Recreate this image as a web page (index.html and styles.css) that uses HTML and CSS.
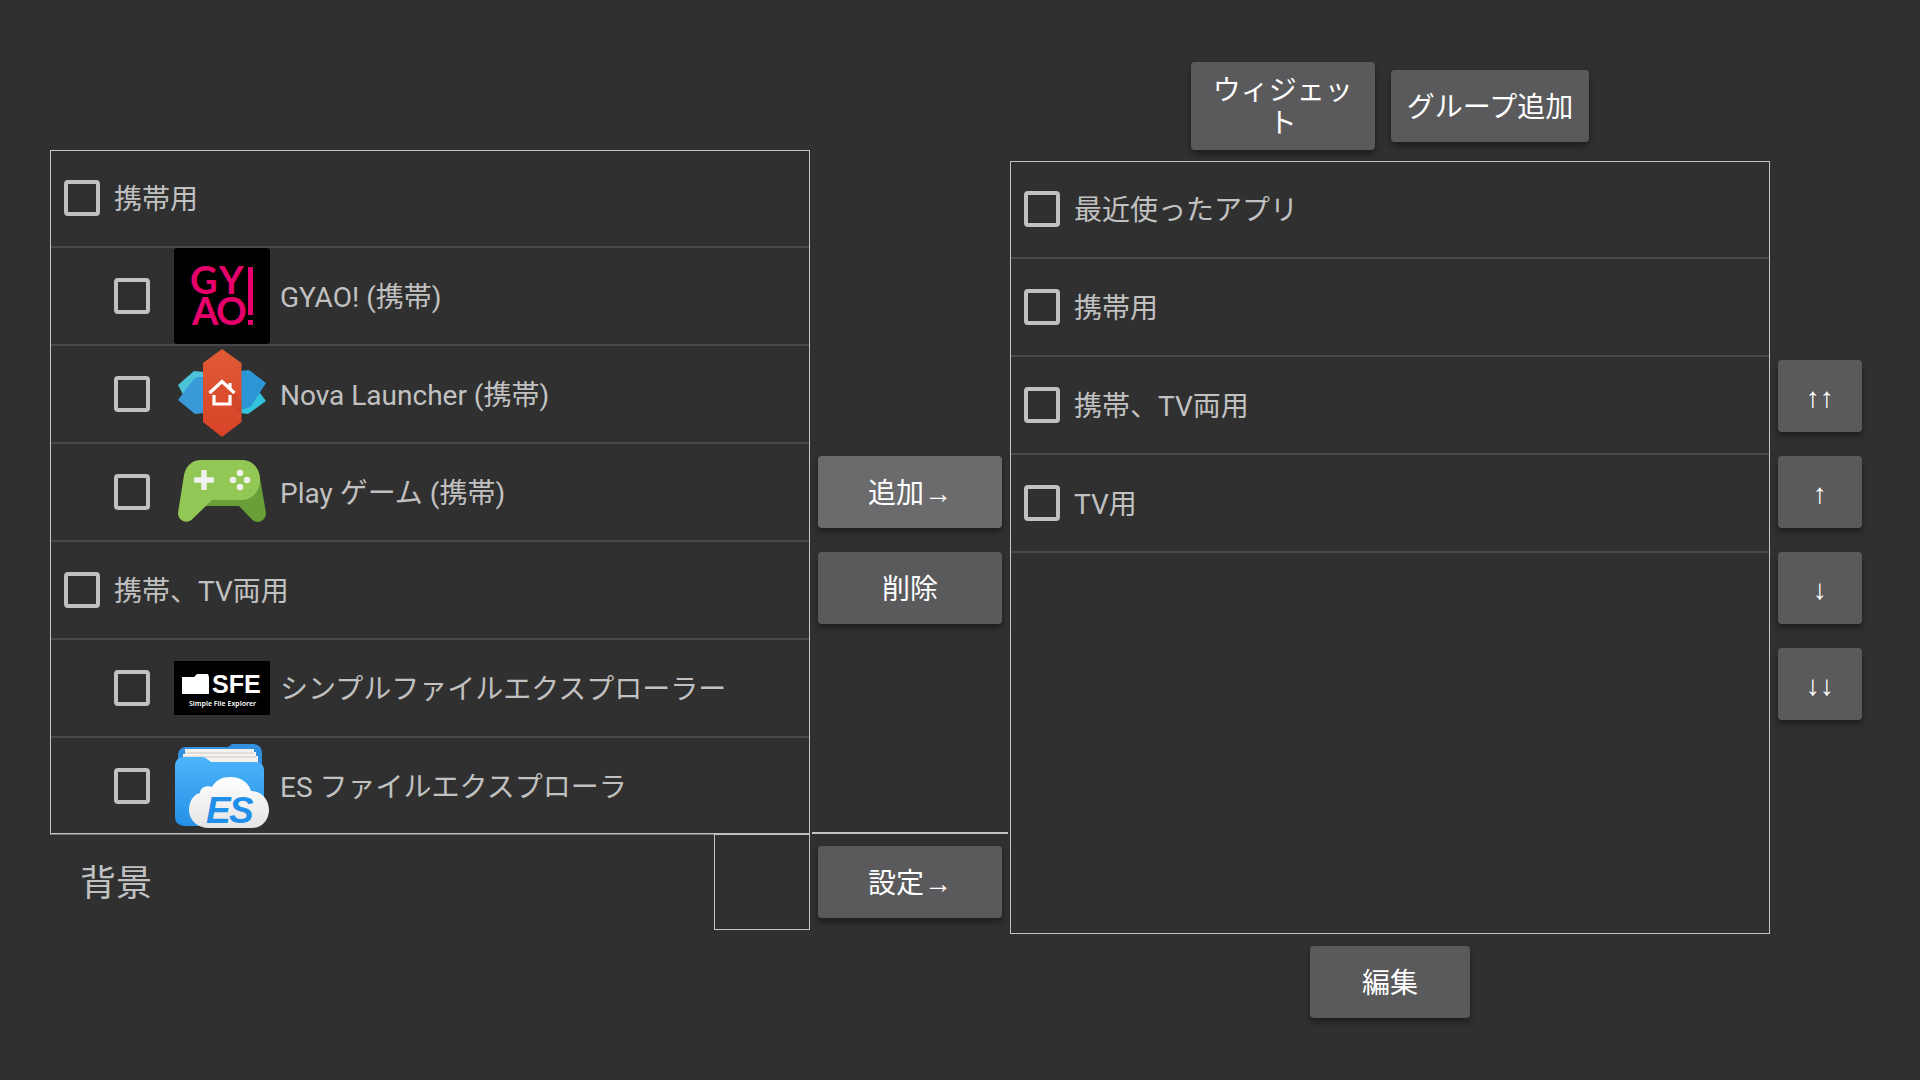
FILE: index.html
```html
<!DOCTYPE html>
<html lang="ja">

<head>
    <meta charset="UTF-8">
    <meta name="viewport" content="width=device-width, initial-scale=1.0">
    <title>アプリ編集</title>
    <link rel="stylesheet" href="styles.css">
</head>

<body>
    <main class="screen">
        <section class="source">
            <ul class="list">
                <li><label class="row"><input type="checkbox"><span>携帯用</span></label></li>
                <li>
                    <label class="row child">
                        <input type="checkbox">
                        <svg class="icon" viewBox="0 0 96 96" aria-hidden="true">
                            <rect width="96" height="96" rx="3" fill="#000"/>
                            <text fill="#e6006b" font-family="Lato, sans-serif" font-weight="700" font-size="38"><tspan x="16 45" y="46">GY</tspan><tspan x="18 42" y="77">AO</tspan></text>
                            <path d="M74 19h5v48h-5zM74 72h5v5h-5z" fill="#e6006b"/>
                        </svg>
                        <span>GYAO! (携帯)</span>
                    </label>
                </li>
                <li>
                    <label class="row child">
                        <input type="checkbox">
                        <svg class="icon" viewBox="0 0 96 96" aria-hidden="true">
                            <defs>
                                <linearGradient id="nova" x1="0" y1="0" x2="0" y2="1">
                                    <stop offset="0" stop-color="#e05a35"/>
                                    <stop offset="1" stop-color="#d84327"/>
                                </linearGradient>
                            </defs>
                            <path d="M4 39L20 25L30 26V60L14 58Z" fill="#4cc3d9"/>
                            <path d="M4 54L19 34Q21 31 24 31H30V67L21 68Z" fill="#3a9ad9"/>
                            <path d="M92 55L74 68L66 67V50L86 47Z" fill="#33c3da"/>
                            <path d="M66 25L75 24L92 37L78 59Q76 62 73 62L66 64Z" fill="#2b95d6"/>
                            <path d="M48 3L67.500 17V76L48 91L29 76V17Z" fill="url(#nova)"/>
                            <path d="M60 46L67.500 54V70L58 59V49Z" fill="#b93a22" opacity=".3"/>
                            <path d="M35.500 47L48 35.500L60.500 47M56 42V37M40 49V58H56V49" fill="none" stroke="#fff" stroke-width="3.200"/>
                        </svg>
                        <span>Nova Launcher (携帯)</span>
                    </label>
                </li>
                <li>
                    <label class="row child">
                        <input type="checkbox">
                        <svg class="icon" viewBox="0 0 96 96" aria-hidden="true">
                            <path d="M86 34L92 69C92 77 83 81 77.500 75L65 62H31L36 50L70 50Z" fill="#689f38"/>
                            <path d="M27 16H68C78 16 86 24 86 35C86 47 79 56 67 56H38L19 74.500C13 81 4 77 4 69L10 31C12 22 18 16 27 16Z" fill="#92c755"/>
                            <path d="M27.300 26h5.400v7.300H40v5.400h-7.300V46h-5.400v-7.300H20v-5.400h7.300z" fill="#f1f1f1"/>
                            <g fill="#f1f1f1">
                                <circle cx="66" cy="29" r="3.200"/>
                                <circle cx="59" cy="36" r="3.200"/>
                                <circle cx="73" cy="36" r="3.200"/>
                                <circle cx="66" cy="43" r="3.200"/>
                            </g>
                        </svg>
                        <span>Play ゲーム (携帯)</span>
                    </label>
                </li>
                <li><label class="row"><input type="checkbox"><span>携帯、TV両用</span></label></li>
                <li>
                    <label class="row child">
                        <input type="checkbox">
                        <svg class="icon" viewBox="0 0 96 96" aria-hidden="true">
                            <rect y="21" width="96" height="54" fill="#000"/>
                            <path d="M8 37H20L23 34H34L35 37V54H8Z" fill="#fff"/>
                            <text x="38" y="53" fill="#fff" font-family="Liberation Sans, sans-serif" font-weight="700" font-size="25">SFE</text>
                            <text x="15" y="66" fill="#fff" font-family="Noto Sans, sans-serif" font-weight="600" font-size="7">Simple File Explorer</text>
                        </svg>
                        <span>シンプルファイルエクスプローラー</span>
                    </label>
                </li>
                <li>
                    <label class="row child">
                        <input type="checkbox">
                        <svg class="icon" viewBox="0 0 96 96" aria-hidden="true">
                            <defs>
                                <linearGradient id="folder" x1="0" y1="0" x2="0" y2="1">
                                    <stop offset="0" stop-color="#4db5fb"/>
                                    <stop offset="1" stop-color="#2590e6"/>
                                </linearGradient>
                                <linearGradient id="cloud" x1="0" y1="0" x2="0" y2="1">
                                    <stop offset="0" stop-color="#fff"/>
                                    <stop offset="1" stop-color="#e4e4e6"/>
                                </linearGradient>
                            </defs>
                            <path d="M4 30V16Q5 10 11 9H54L58 6H80Q88 7 88 15V30Z" fill="#338fe0"/>
                            <path d="M11 11H80V14H82V18H84V26H9V16H11Z" fill="#f4f1ee"/>
                            <path d="M11 15H80M9 19H82" stroke="#cfc9c6" stroke-width="1"/>
                            <path d="M1 27Q2 19 10 19H28Q31 19 33 21L37 24H82Q90 25 90 32V80Q90 88 82 88H10Q1 87 1 79Z" fill="url(#folder)"/>
                            <path d="M35 90C23 90 15 82 15 72C15 63 20 56 26 55C26 50 32 47 38 49C42 42 48 39 56 39C67 39 75 45 77 53C88 53 95 62 95 72C95 82 88 90 78 90Z" fill="url(#cloud)"/>
                            <text x="32 55" y="85" fill="#1f8fea" font-family="Liberation Sans, sans-serif" font-weight="700" font-style="italic" font-size="37">ES</text>
                        </svg>
                        <span>ES ファイルエクスプローラ</span>
                    </label>
                </li>
            </ul>
            <div class="wallpaper">
                <span>背景</span>
                <div class="preview"></div>
            </div>
        </section>

        <section class="actions">
            <div class="stack">
                <button type="button" class="btn active">追加→</button>
                <button type="button" class="btn">削除</button>
            </div>
            <div class="settings">
                <button type="button" class="btn">設定→</button>
            </div>
        </section>

        <section class="target">
            <div class="toolbar">
                <button type="button" class="btn widget">ウィジェット</button>
                <button type="button" class="btn">グループ追加</button>
            </div>
            <ul class="list">
                <li><label class="row"><input type="checkbox"><span>最近使ったアプリ</span></label></li>
                <li><label class="row"><input type="checkbox"><span>携帯用</span></label></li>
                <li><label class="row"><input type="checkbox"><span>携帯、TV両用</span></label></li>
                <li><label class="row"><input type="checkbox"><span>TV用</span></label></li>
            </ul>
            <button type="button" class="btn edit">編集</button>
        </section>

        <section class="order stack">
            <button type="button" class="btn">↑↑</button>
            <button type="button" class="btn">↑</button>
            <button type="button" class="btn">↓</button>
            <button type="button" class="btn">↓↓</button>
        </section>
    </main>
</body>

</html>
```
FILE: styles.css
```css
* {
    box-sizing: border-box;
}

body {
    margin: 0;
    background-color: #303030;
    color: #c1c1c1;
    font-family: Roboto, "Noto Sans CJK JP", sans-serif;
    font-size: 28px;
    line-height: 33px;
}

.screen {
    display: grid;
    grid-template-columns: 1fr 200px 1fr 100px;
    height: 100vh;
    padding: 0 50px;
}

.source,
.target {
    display: flex;
    flex-direction: column;
    min-width: 0;
    min-height: 0;
}

.source {
    padding: 150px 0;
}

.target {
    padding: 62px 0;
}

/* the frame is an outline so that it lies over the rows */
.list {
    flex: 1;
    min-height: 0;
    margin: 0;
    padding: 0;
    overflow: hidden;
    list-style: none;
    outline: 1px solid #c1c1c1;
    outline-offset: -1px;
}

.list li {
    border-bottom: 2px solid #494949;
}

.row {
    display: flex;
    align-items: center;
    gap: 14px;
    height: 96px;
    padding-left: 14px;
    white-space: nowrap;
}

.child {
    gap: 10px;
    padding-left: 64px;
}

.row span {
    padding-top: 2px;
}

.row input {
    appearance: none;
    flex: none;
    width: 36px;
    height: 36px;
    margin: 0;
    border: 4px solid #c1c1c1;
    border-radius: 4px;
}

.row input:checked {
    background-color: #c1c1c1;
}

.icon {
    flex: none;
    width: 96px;
    height: 96px;
    margin-left: 14px;
}

.wallpaper {
    display: flex;
    align-items: center;
    justify-content: space-between;
    height: 96px;
    padding-left: 30px;
    font-size: 36px;
    box-shadow: inset 0 1px #777;
}

.wallpaper span {
    padding-top: 4px;
}

.preview {
    width: 96px;
    height: 96px;
    border: 1px solid #c1c1c1;
}

.btn {
    min-height: 72px;
    padding: 12px 16px 10px;
    border: none;
    border-radius: 4px;
    background-color: #5a5a5c;
    color: #fff;
    font: inherit;
    font-family: Roboto, "Liberation Sans", "Noto Sans CJK JP", sans-serif;
    box-shadow: 0 4px 6px rgba(0, 0, 0, 0.4);
    cursor: pointer;
}

.btn:hover,
.active {
    background-color: #6b6b6d;
}

.stack {
    display: flex;
    flex-direction: column;
    gap: 24px;
    padding: 0 8px;
}

.actions {
    display: grid;
    grid-template-rows: 1fr auto 1fr;
}

.actions .stack {
    grid-row: 2;
}

.settings {
    grid-row: 3;
    align-self: end;
    display: grid;
    margin: 0 2px 150px;
    padding: 12px 6px;
    border-top: 2px solid #c1c1c1;
}

.toolbar {
    display: flex;
    align-items: center;
    justify-content: center;
    gap: 16px;
    margin-bottom: 11px;
}

.widget {
    width: 184px;
}

.edit {
    align-self: center;
    width: 160px;
    margin-top: 12px;
}

.order {
    justify-content: center;
}
```
